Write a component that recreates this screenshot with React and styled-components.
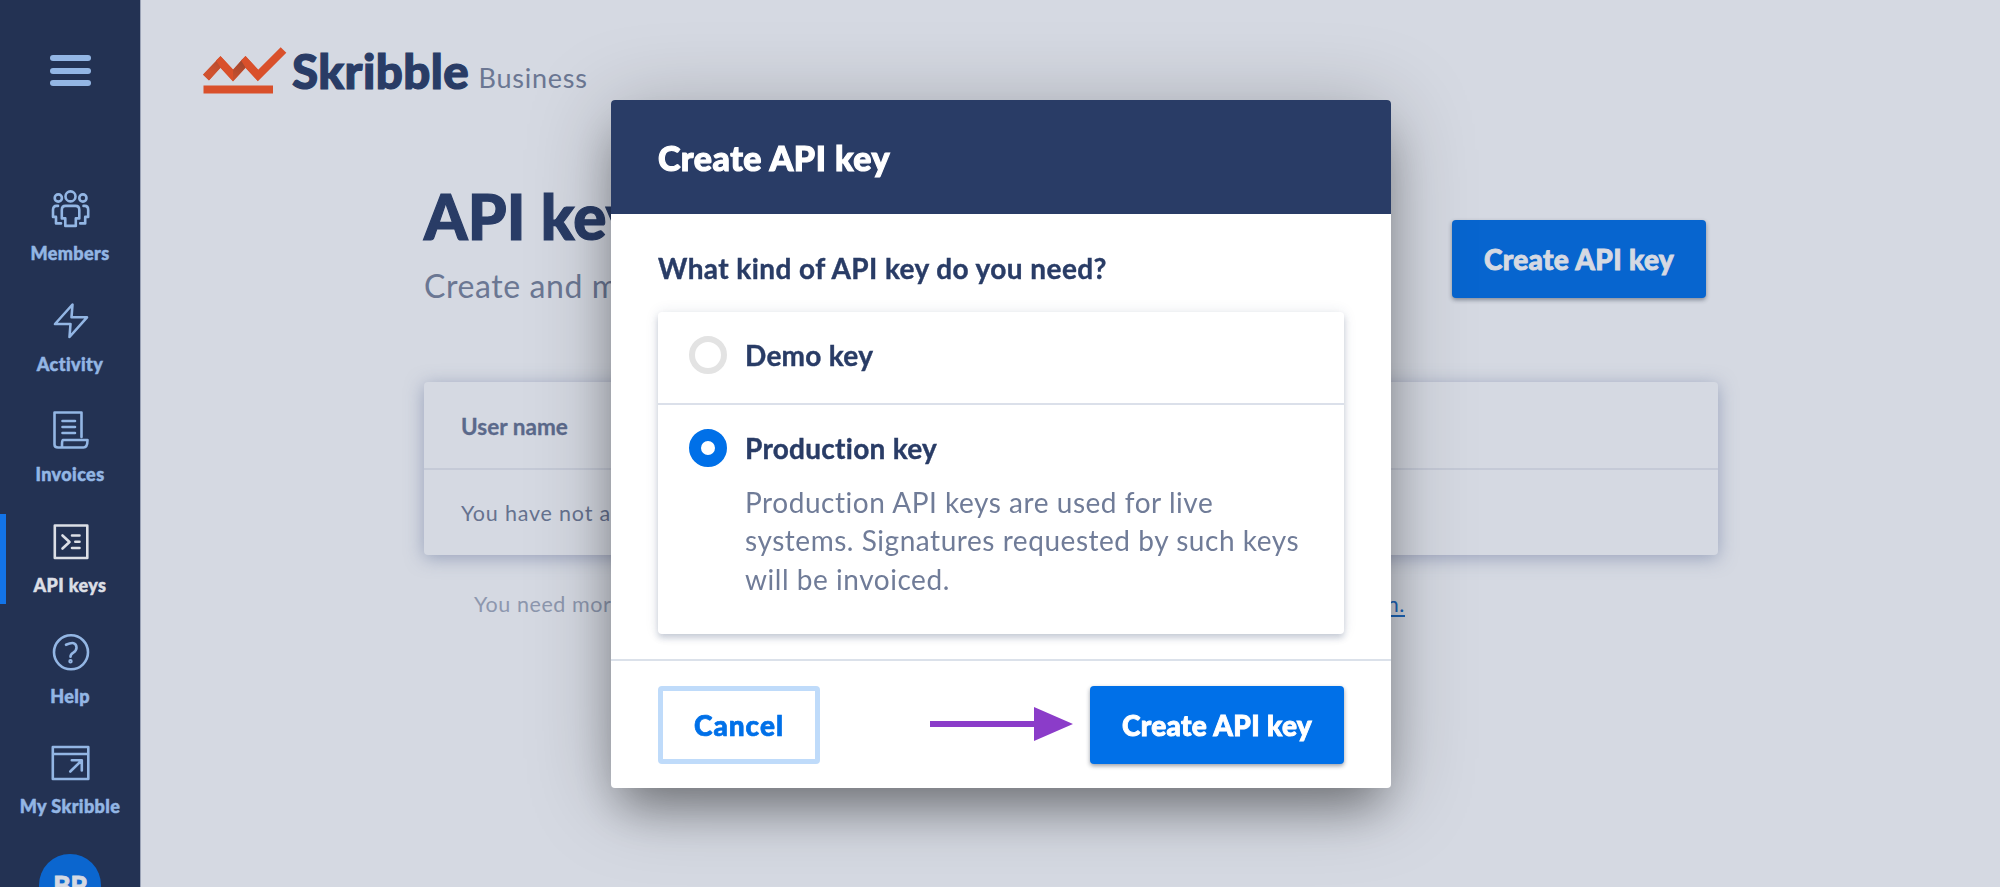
import React from 'react';
import styled, { createGlobalStyle, css } from 'styled-components';

const navy = '#233253';
const ink = '#293c66';
const muted = '#6b7793';
const page = '#d5d9e2';
const sky = '#93b6e4';

const GlobalStyle = createGlobalStyle`
  * { box-sizing: border-box; }
  html, body { margin: 0; height: 100%; overflow: hidden; background: ${page}; }
  body { font-family: Lato, "Liberation Sans", sans-serif; color: ${ink}; }
  h1, h2, h3, p { margin: 0; }
  button { font-family: inherit; }
`;

const Shell = styled.div`
  display: flex;
  height: 887px;
  overflow: hidden;
`;

const Sidebar = styled.nav`
  flex: none;
  width: 141px;
  display: flex;
  flex-direction: column;
  align-items: center;
  background: ${navy};
  border-right: 1px solid #9ba3b6;
`;

const MenuButton = styled.button`
  flex: none;
  display: flex;
  flex-direction: column;
  gap: 6.5px;
  height: 31px;
  margin: 55px 0 96px;
  padding: 0;
  border: 0;
  background: none;
`;

const MenuBar = styled.span`
  width: 41px;
  height: 6px;
  border-radius: 3px;
  background: ${sky};
`;

const NavItem = styled.a`
  flex: none;
  width: 140px;
  height: 90px;
  margin-bottom: 20.67px;
  padding-top: 6px;
  display: flex;
  flex-direction: column;
  align-items: center;
  gap: 12px;
  color: ${sky};
  ${(p) => p.$active && css`
    color: #dcdfe6;
    background: linear-gradient(#1374e8, #1374e8) left / 6px 100% no-repeat;
  `}
`;

const NavIcon = styled.svg`
  width: 40px;
  height: 42px;
  flex: none;
  fill: none;
  stroke: currentColor;
  stroke-width: 2.6;
  stroke-linejoin: round;
  stroke-linecap: round;
`;

const NavLabel = styled.span`
  font-size: 18px;
  line-height: 22px;
  font-weight: 900;
  letter-spacing: 0.4px;
  -webkit-text-stroke: 0.5px currentColor;
  white-space: nowrap;
`;

const Avatar = styled.div`
  flex: none;
  width: 62px;
  height: 62px;
  margin-top: 8px;
  border-radius: 50%;
  background: #0b66cf;
  color: ${page};
  display: flex;
  align-items: center;
  justify-content: center;
  font-size: 26px;
  line-height: 32px;
  font-weight: 900;
  -webkit-text-stroke: 0.8px currentColor;
`;

const Main = styled.main`
  flex: 1;
  min-width: 0;
  padding-top: 40px;
`;

const Brand = styled.div`
  display: flex;
  align-items: flex-start;
  height: 60px;
  margin-left: 60px;
`;

const LogoMark = styled.svg`
  width: 90px;
  height: 56px;
`;

const BrandName = styled.span`
  margin: 1px 0 0 1px;
  font-size: 47.5px;
  line-height: 60px;
  font-weight: 900;
  letter-spacing: 0.4px;
  -webkit-text-stroke: 1.2px currentColor;
`;

const BrandPlan = styled.span`
  margin: 8px 0 0 9.5px;
  font-size: 27px;
  line-height: 60px;
  letter-spacing: 0.75px;
  color: ${muted};
`;

const Content = styled.section`
  width: 1294px;
  margin: 84px 0 0 283px;
`;

const PageHead = styled.header`
  display: flex;
  justify-content: space-between;
  padding-right: 12px;
  height: 198px;
`;

const PageTitle = styled.h1`
  font-size: 62px;
  line-height: 65px;
  font-weight: 900;
  letter-spacing: 0.2px;
  -webkit-text-stroke: 1.2px currentColor;
`;

const PageIntro = styled.p`
  margin-top: 15px;
  font-size: 32px;
  line-height: 44px;
  letter-spacing: 0.6px;
  color: ${muted};
`;

const PrimaryButton = styled.button`
  width: 254px;
  height: 78px;
  padding: 0 0 1px;
  border: 0;
  border-radius: 4px;
  background: ${(p) => (p.$dimmed ? '#0765cf' : '#0070e8')};
  color: ${(p) => (p.$dimmed ? page : '#fff')};
  box-shadow: 0 2px 4px rgba(30, 40, 60, 0.45);
  font-size: 28px;
  font-weight: 900;
  letter-spacing: 0.35px;
  -webkit-text-stroke: 0.9px currentColor;
`;

const HeadAction = styled.div`
  padding-top: 36px;
`;

const Table = styled.div`
  height: 173px;
  border-radius: 4px;
  background: ${page};
  box-shadow: 0 3px 18px rgba(92, 108, 150, 0.5);
`;

const TableRow = styled.div`
  display: flex;
  align-items: center;
  height: 85px;
  padding-left: 37px;
  font-size: 21.5px;
  letter-spacing: 0.8px;
  color: #66728f;
  ${(p) => p.$head && css`
    height: 88px;
    padding-top: 2px;
    border-bottom: 2px solid #c5cad7;
    font-size: 22.5px;
    font-weight: 700;
    letter-spacing: 0.05px;
    -webkit-text-stroke: 0.3px currentColor;
    color: #5b698b;
  `}
`;

const Footnote = styled.p`
  display: flex;
  justify-content: space-between;
  width: 931px;
  margin: 35px 0 0 50px;
  font-size: 21.5px;
  line-height: 28px;
  letter-spacing: 0.55px;
  color: #8d97ae;
`;

const FootLink = styled.a`
  color: #1c66bb;
  text-decoration: underline;
  text-decoration-thickness: 2px;
  text-underline-offset: 3px;
`;

const Overlay = styled.div`
  position: fixed;
  inset: 0;
  display: flex;
  justify-content: center;
  align-items: flex-start;
  padding: 100px 0 0 2px;
`;

const Dialog = styled.div`
  width: 780px;
  height: 688px;
  border-radius: 4px;
  background: #fff;
  display: flex;
  flex-direction: column;
  box-shadow: 0 28px 44px -10px rgba(0, 0, 0, 0.36), 0 10px 84px rgba(0, 0, 0, 0.25);
`;

const DialogHead = styled.header`
  flex: none;
  height: 114px;
  padding: 2px 47px 0;
  display: flex;
  align-items: center;
  border-radius: 4px 4px 0 0;
  background: #293c66;
`;

const DialogTitle = styled.h2`
  color: #fff;
  font-size: 34px;
  line-height: 44px;
  font-weight: 900;
  letter-spacing: 0.5px;
  -webkit-text-stroke: 1.1px currentColor;
`;

const DialogBody = styled.div`
  flex: 1;
  padding: 34px 47px 0;
`;

const Question = styled.h3`
  font-size: 28px;
  line-height: 40px;
  font-weight: 700;
  letter-spacing: 0.42px;
  -webkit-text-stroke: 0.4px currentColor;
`;

const Options = styled.div`
  margin-top: 24px;
  height: 322px;
  border-radius: 4px;
  box-shadow: 0 4px 6px rgba(41, 60, 102, 0.22), 0 0 14px rgba(41, 60, 102, 0.1);
`;

const Option = styled.label`
  display: flex;
  align-items: flex-start;
  gap: 18px;
  padding: 24px 31px 0;
  height: 91px;
  & + & {
    height: 231px;
    border-top: 2px solid #dbe0ea;
  }
`;

const Radio = styled.span`
  flex: none;
  width: 38px;
  height: 38px;
  border-radius: 50%;
  background: #fff;
  border: ${(p) => (p.$checked ? '12.5px solid #0070e8' : '6px solid #e3e3e3')};
`;

const OptionText = styled.div`
  flex: 1;
`;

const OptionTitle = styled.div`
  font-size: 28px;
  line-height: 39px;
  font-weight: 700;
  letter-spacing: 0.28px;
  -webkit-text-stroke: 0.4px currentColor;
  white-space: nowrap;
`;

const OptionHint = styled.p`
  width: 580px;
  margin-top: 14.500px;
  font-size: 28px;
  line-height: 38.6px;
  letter-spacing: 0.54px;
  color: #707c98;
`;

const DialogFoot = styled.footer`
  flex: none;
  height: 129px;
  padding: 25px 47px 0;
  display: flex;
  align-items: flex-start;
  border-top: 2px solid #dbe1ea;
`;

const CancelButton = styled.button`
  width: 162px;
  height: 78px;
  padding: 0 0 1px;
  border: 5px solid #bfdbfa;
  border-radius: 4px;
  background: #fff;
  color: #0070e8;
  font-size: 28px;
  font-weight: 900;
  letter-spacing: 1px;
  -webkit-text-stroke: 0.7px currentColor;
`;

const Arrow = styled.svg`
  width: 143px;
  height: 34px;
  margin: 21px 17px 0 auto;
  fill: #8b3cc9;
`;

const navItems = [
  ['Members', (
    <g transform="translate(0.5 -2.6)">
      <circle cx="20" cy="11" r="5" />
      <circle cx="7.8" cy="12.6" r="3.6" />
      <circle cx="32.4" cy="12.6" r="3.6" />
      <path d="M15 20.5h10q3.8 0 3.8 4V33h-3.5v7.500h-10.5V33h-3.5v-8.500q0-4 3.700-4z" />
      <path d="M7.500 20.500H6q-3.500 0-3.500 4v7h3v6.500h5M33 20.500h1.200q3.500 0 3.500 4v7h-3v6.500h-5" />
    </g>
  )],
  ['Activity', <path d="M22.500 5.500 5 25h15.500l-1 13L37 18.300H21.500z" />],
  ['Invoices', (
    <>
      <path d="M31.500 28V3.500H4.500v32q0 3 3.500 3h25.500q4 0 4-7.500H13q-1 0-1 4.500v2.500" />
      <path d="M12.500 12h12.500M12.500 18h12.500M12.500 24h12.500" />
    </>
  )],
  ['API keys', (
    <>
      <path d="M4.800 5.500h32.500v32.500H4.800z" />
      <path d="M12.500 15.500l7 6.500-7 6.500M22 15.500h7.500M25.300 21.800h4.200M22 28h7.500" />
    </>
  )],
  ['Help', (
    <g transform="translate(0.5 0.8)">
      <circle cx="20.500" cy="20.500" r="17" />
      <path d="M15.500 13q10-4.500 10.500 2.500.3 3-3.500 5.500-2.500 1.500-2.500 4" />
      <circle cx="20" cy="29.500" r="0.9" />
    </g>
  )],
  ['My Skribble', (
    <g transform="translate(0.3 1.5)">
      <path d="M2.500 4.500h35.500v32H2.500zM2.500 11.500H38" />
      <path d="M21.500 17.800h10V28M31 18.300 20 29" />
    </g>
  )],
];

export default function App() {
  return (
    <>
      <GlobalStyle />
      <Shell>
        <Sidebar>
          <MenuButton aria-label="Menu"><MenuBar /><MenuBar /><MenuBar /></MenuButton>
          {navItems.map(([label, icon]) => (
            <NavItem key={label} $active={label === 'API keys'}>
              <NavIcon viewBox="0 0 40 42">{icon}</NavIcon>
              <NavLabel>{label}</NavLabel>
            </NavItem>
          ))}
          <Avatar>BP</Avatar>
        </Sidebar>
        <Main>
          <Brand>
            <LogoMark viewBox="0 0 90 56">
              <defs>
                <linearGradient id="fold" x1="0" y1="1" x2="1" y2="0">
                  <stop offset="0.3" stopColor="#d0522f" />
                  <stop offset="1" stopColor="#98452f" />
                </linearGradient>
              </defs>
              <path d="M5 37.500 19.500 22 32 35.500 44.500 22 57 35.500 82.500 10" fill="none" stroke="#d9502b" strokeWidth="8" />
              <path d="M2 34.500 17 19l2.500 8.500L8 40.500zM29.500 33 41.500 19l3 8.500L32 41z" fill="url(#fold)" />
              <path d="M15 20.500 19.500 16 32 29.500 32 41 19.500 27.500zM40 20.500 44.500 16 57 29.500V41L44.500 27.500z" fill="#d9502b" />
              <path d="M2.500 45.500h69.500v8H2.500z" fill="#d9502b" />
            </LogoMark>
            <BrandName>Skribble</BrandName>
            <BrandPlan>Business</BrandPlan>
          </Brand>
          <Content>
            <PageHead>
              <div>
                <PageTitle>API keys</PageTitle>
                <PageIntro>Create and manage API keys</PageIntro>
              </div>
              <HeadAction><PrimaryButton $dimmed>Create API key</PrimaryButton></HeadAction>
            </PageHead>
            <Table>
              <TableRow $head>User name</TableRow>
              <TableRow>You have not added API keys</TableRow>
            </Table>
            <Footnote>
              <span>You need more information?</span>
              <FootLink>API documentation.</FootLink>
            </Footnote>
          </Content>
        </Main>
      </Shell>
      <Overlay>
        <Dialog role="dialog">
          <DialogHead><DialogTitle>Create API key</DialogTitle></DialogHead>
          <DialogBody>
            <Question>What kind of API key do you need?</Question>
            <Options>
              <Option>
                <Radio />
                <OptionText><OptionTitle>Demo key</OptionTitle></OptionText>
              </Option>
              <Option>
                <Radio $checked />
                <OptionText>
                  <OptionTitle>Production key</OptionTitle>
                  <OptionHint>
                    Production API keys are used for live systems. Signatures requested by such keys will be invoiced.
                  </OptionHint>
                </OptionText>
              </Option>
            </Options>
          </DialogBody>
          <DialogFoot>
            <CancelButton>Cancel</CancelButton>
            <Arrow viewBox="0 0 143 34"><path d="M0 14h104V0l39 17-39 17V20H0z" /></Arrow>
            <PrimaryButton>Create API key</PrimaryButton>
          </DialogFoot>
        </Dialog>
      </Overlay>
    </>
  );
}
